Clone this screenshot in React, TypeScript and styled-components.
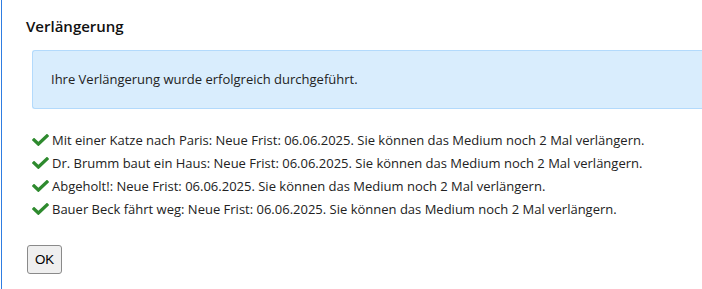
import styled, { createGlobalStyle } from 'styled-components'

const GlobalStyle = createGlobalStyle`
  html, body {
    margin: 0;
    padding: 0;
    background: #ffffff;
  }
  body {
    font-family: 'Open Sans', 'Liberation Sans', sans-serif;
    color: #222222;
  }
`

const Page = styled.div`
  padding-left: 1px;
`

const Panel = styled.section`
  border-left: 1px solid #2f7de1;
  min-height: 289px;
  padding: 14px 0 0 24px;
  box-sizing: border-box;
`

const Title = styled.h2`
  margin: 0 0 12px;
  font-size: 15px;
  line-height: 24px;
  font-weight: 600;
  color: #111111;
`

const Alert = styled.div`
  margin-left: 6px;
  padding: 19px 18px;
  background: #d9edfd;
  border: 1px solid #b3dafc;
  border-right: none;
  border-radius: 3px 0 0 3px;
  font-size: 13px;
  line-height: 19px;
  color: #222222;
`

const ResultList = styled.ul`
  list-style: none;
  margin: 19px 0 0 6px;
  padding: 0;
`

const ResultItem = styled.li`
  display: flex;
  align-items: center;
  gap: 3px;
  height: 23px;
  font-size: 13px;
  color: #222222;
  white-space: nowrap;
`

const CheckIcon = styled.svg`
  width: 17px;
  height: 16px;
  flex-shrink: 0;
  fill: #2e8a2e;
`

const OkButton = styled.button`
  margin: 25px 0 0 1px;
  padding: 5px 7px;
  font-family: 'Liberation Sans', Arial, sans-serif;
  font-size: 13.33px;
  line-height: 17px;
  color: #000000;
  background: #efefef;
  border: 1px solid #8a8a8a;
  border-radius: 3px;
`

const items = [
  'Mit einer Katze nach Paris',
  'Dr. Brumm baut ein Haus',
  'Abgeholt!',
  'Bauer Beck fährt weg',
]

const Check = () => (
  <CheckIcon viewBox="0 0 512 512" preserveAspectRatio="none" aria-hidden="true">
    <path d="M173.898 439.404l-166.4-166.4c-9.997-9.997-9.997-26.206 0-36.204l36.203-36.204c9.997-9.998 26.207-9.998 36.204 0L192 312.69 432.095 72.596c9.997-9.997 26.207-9.997 36.204 0l36.203 36.204c9.997 9.997 9.997 26.206 0 36.204l-294.4 294.401c-9.998 9.997-26.207 9.997-36.204-.001z" />
  </CheckIcon>
)

export default function App() {
  return (
    <Page>
      <GlobalStyle />
      <Panel>
        <Title>Verlängerung</Title>
        <Alert>Ihre Verlängerung wurde erfolgreich durchgeführt.</Alert>
        <ResultList>
          {items.map(title => (
            <ResultItem key={title}>
              <Check />
              <span>
                {title}: Neue Frist: 06.06.2025. Sie können das Medium noch 2 Mal verlängern.
              </span>
            </ResultItem>
          ))}
        </ResultList>
        <OkButton type="button">OK</OkButton>
      </Panel>
    </Page>
  )
}
